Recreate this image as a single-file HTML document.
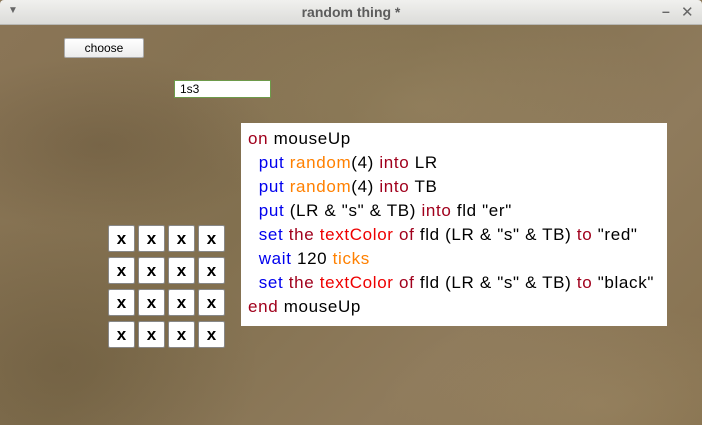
<!DOCTYPE html>
<html><head><style>
body{margin:0;width:702px;height:425px;overflow:hidden;font-family:"Liberation Sans",sans-serif;position:relative;background:#8a7657}
.tb{position:absolute;left:0;top:0;width:702px;height:24px;background:linear-gradient(#f0f0ee,#dcdcd9);border-bottom:1px solid #b8b8b4;border-radius:4px 4px 0 0}
.tb .t{position:absolute;left:0;right:0;top:4px;text-align:center;font-weight:bold;font-size:14px;color:#5c5c5c}
.bg{position:absolute;left:0;top:25px;width:702px;height:400px;background:
radial-gradient(ellipse 180px 90px at 100px 120px,rgba(60,45,25,.2),transparent),
radial-gradient(ellipse 250px 120px at 420px 80px,rgba(190,170,130,.2),transparent),
radial-gradient(ellipse 200px 150px at 60px 340px,rgba(60,45,25,.2),transparent),
radial-gradient(ellipse 220px 100px at 600px 380px,rgba(190,170,130,.2),transparent),
linear-gradient(135deg,#8a7556,#82704f 40%,#8f7b5c 70%,#86714f)}
.btn{position:absolute;left:64px;top:38px;width:78px;height:18px;background:linear-gradient(#fff,#ececec);border:1px solid #aaa;border-radius:2px;font-size:12px;text-align:center;line-height:18px}
.fld{position:absolute;left:174px;top:80px;width:90px;height:16px;background:#fff;border:1px solid #6d9a4a;font-size:12px;line-height:16px;padding-left:5px;box-sizing:content-box}
.code{position:absolute;left:241px;top:123px;width:426px;height:203px;background:#fff;font-size:17px;letter-spacing:0.65px;line-height:24px;padding:4px 0 0 7px;box-sizing:border-box;color:#000;white-space:pre}
.k{color:#a0001c}.b{color:#0000ee}.o{color:#ff8000}.r{color:#ee0000}
.c{position:absolute;width:27px;height:27px;background:#fff;border:1px solid #888;box-sizing:border-box;border-radius:2px;font-weight:bold;font-size:17px;text-align:center;line-height:25px}
</style></head><body>
<div class="tb"><span style="position:absolute;left:8px;top:5px;font-size:10px;color:#666">▼</span><div class="t">random thing *</div><span style="position:absolute;left:662px;top:3px;font-size:14px;color:#666;font-weight:bold">–</span><span style="position:absolute;left:681px;top:3px;font-size:15px;color:#666">✕</span></div>
<div class="bg"></div>
<div class="btn">choose</div>
<div class="fld">1s3</div>
<div class="code"><span class="k">on</span> mouseUp
  <span class="b">put</span> <span class="o">random</span>(4) <span class="k">into</span> LR
  <span class="b">put</span> <span class="o">random</span>(4) <span class="k">into</span> TB
  <span class="b">put</span> (LR &amp; "s" &amp; TB) <span class="k">into</span> fld "er"
  <span class="b">set</span> <span class="k">the</span> <span class="r">textColor</span> <span class="k">of</span> fld (LR &amp; "s" &amp; TB) <span class="k">to</span> "red"
  <span class="b">wait</span> 120 <span class="o">ticks</span>
  <span class="b">set</span> <span class="k">the</span> <span class="r">textColor</span> <span class="k">of</span> fld (LR &amp; "s" &amp; TB) <span class="k">to</span> "black"
<span class="k">end</span> mouseUp</div>
<div class="c" style="left:108px;top:225px">x</div><div class="c" style="left:138px;top:225px">x</div><div class="c" style="left:168px;top:225px">x</div><div class="c" style="left:198px;top:225px">x</div>
<div class="c" style="left:108px;top:257px">x</div><div class="c" style="left:138px;top:257px">x</div><div class="c" style="left:168px;top:257px">x</div><div class="c" style="left:198px;top:257px">x</div>
<div class="c" style="left:108px;top:289px">x</div><div class="c" style="left:138px;top:289px">x</div><div class="c" style="left:168px;top:289px">x</div><div class="c" style="left:198px;top:289px">x</div>
<div class="c" style="left:108px;top:321px">x</div><div class="c" style="left:138px;top:321px">x</div><div class="c" style="left:168px;top:321px">x</div><div class="c" style="left:198px;top:321px">x</div>
</body></html>
